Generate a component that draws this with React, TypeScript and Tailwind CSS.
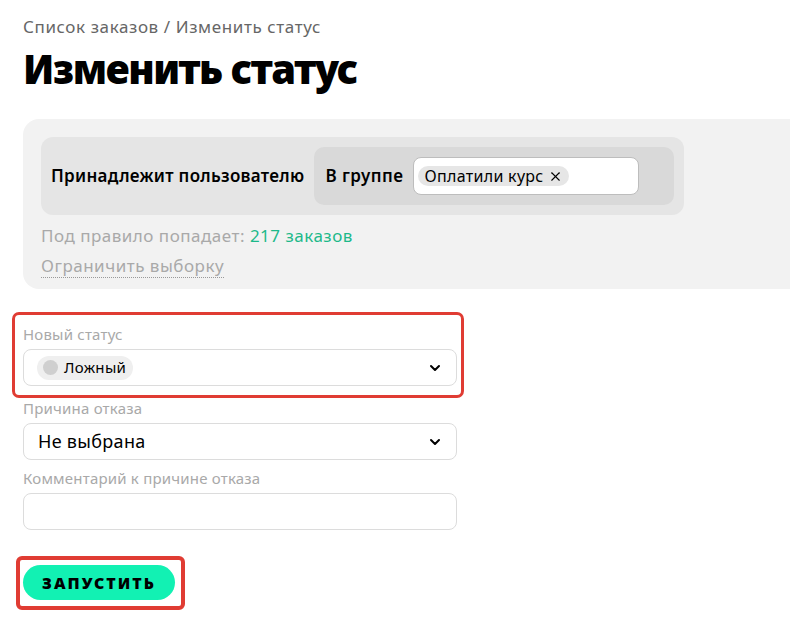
import { ChevronDown, X } from 'lucide-react';

const font = { fontFamily: '"Noto Sans", "Open Sans", sans-serif' };

const Field = ({ label, children }: { label: string; children: React.ReactNode }) => (
  <div>
    <div className="text-[15px] leading-[22px] tracking-[0.2px] text-[#a9a9a9] mb-[4px]">{label}</div>
    {children}
  </div>
);

const App = () => {
  return (
    <div className="min-h-screen bg-white pl-[23px] pt-[16px] text-black" style={font}>
      <div className="text-[17px] leading-[22px] tracking-[0.6px] text-[#666]">Список заказов / Изменить статус</div>
      <h1 className="mt-[9px] text-[40px] leading-[44px] font-black tracking-[-1.5px]">Изменить статус</h1>

      <div className="mt-[28px] bg-[#f2f2f2] rounded-l-[16px] pl-[18px] pt-[18px] pb-[12px]">
        <div className="inline-flex items-center bg-[#e5e5e5] rounded-[12px] pl-[10px] pr-[10px] py-[10px]">
          <span className="text-[17px] tracking-[0.3px] font-semibold mr-[10px]">Принадлежит пользователю</span>
          <div className="flex items-center bg-[#d9d9d9] rounded-[10px] pl-[11px] pr-[35px] py-[10px]">
            <span className="text-[17px] tracking-[0.5px] font-semibold mr-[9px]">В группе</span>
            <div className="w-[226px] h-[38px] bg-white border border-[#bdbdbd] rounded-[8px] flex items-center pl-[4px]">
              <span className="inline-flex items-center bg-[#e6e6e6] rounded-full h-[20px] pl-[7px] pr-[6px] text-[16px] tracking-[0.3px]">
                Оплатили курс
                <X className="w-[15px] h-[15px] ml-[4px]" strokeWidth={1.7} />
              </span>
            </div>
          </div>
        </div>
        <div className="mt-[9px] text-[17px] leading-[24px] tracking-[0.5px] text-[#a9a9a9]">
          Под правило попадает: <span className="text-[#1db98a]">217 заказов</span>
        </div>
        <div className="mt-[7px] text-[17px] leading-[22px] tracking-[0.5px] text-[#a9a9a9]">
          <span className="border-b border-dotted border-[#999]">Ограничить выборку</span>
        </div>
      </div>

      <div className="w-[434px] mt-[34px] flex flex-col">
        <div className="relative">
          <div className="absolute -left-[11px] -top-[11px] -right-[7px] -bottom-[12px] border-[3px] border-[#e03c33] rounded-[7px] pointer-events-none" />
          <Field label="Новый статус">
            <div className="h-[37px] border border-[#dcdcdc] rounded-[8px] flex items-center justify-between pl-[13px] pr-[13px]">
              <span className="inline-flex items-center bg-[#efefef] rounded-full h-[24px] pl-[6px] pr-[7px] text-[15px] tracking-[0.3px]">
                <span className="w-[15px] h-[15px] rounded-full bg-[#cfcfcf] mr-[6px]" />
                Ложный
              </span>
              <ChevronDown className="w-[16px] h-[16px]" strokeWidth={3} />
            </div>
          </Field>
        </div>
        <div className="mt-[11px]">
          <Field label="Причина отказа">
            <div className="h-[37px] border border-[#dcdcdc] rounded-[8px] flex items-center justify-between pl-[14px] pr-[13px]">
              <span className="text-[18px] tracking-[0.3px]">Не выбрана</span>
              <ChevronDown className="w-[16px] h-[16px]" strokeWidth={3} />
            </div>
          </Field>
        </div>
        <div className="mt-[7px]">
          <Field label="Комментарий к причине отказа">
            <div className="h-[37px] border border-[#dcdcdc] rounded-[8px]" />
          </Field>
        </div>
      </div>

      <div className="relative inline-block mt-[35px]">
        <div className="absolute -left-[7px] -top-[9px] -right-[10px] -bottom-[10px] border-[4px] border-[#e03c33] rounded-[6px] pointer-events-none" />
        <button className="h-[35px] w-[152px] rounded-full bg-[#12f1b3] text-[16px] font-black tracking-[2px]">
          ЗАПУСТИТЬ
        </button>
      </div>
    </div>
  );
};

export default App;
